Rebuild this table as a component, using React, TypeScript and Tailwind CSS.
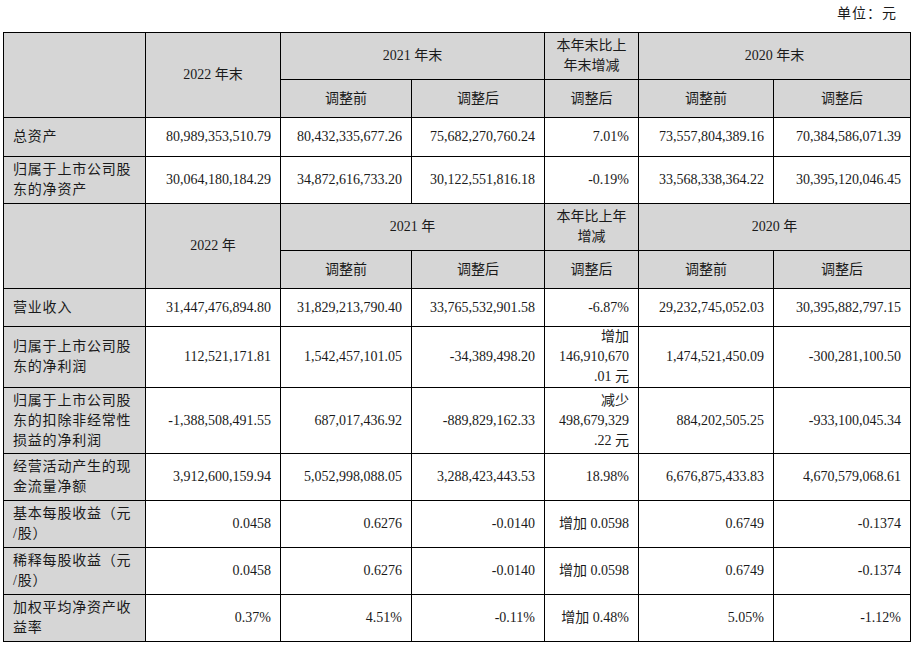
import React from "react";

type Row = { label: React.ReactNode; h: string; values: React.ReactNode[] };

const balanceRows: Row[] = [
  {
    label: "总资产",
    h: "h-[39px]",
    values: ["80,989,353,510.79", "80,432,335,677.26", "75,682,270,760.24", "7.01%", "73,557,804,389.16", "70,384,586,071.39"],
  },
  {
    label: "归属于上市公司股东的净资产",
    h: "h-[47px]",
    values: ["30,064,180,184.29", "34,872,616,733.20", "30,122,551,816.18", "-0.19%", "33,568,338,364.22", "30,395,120,046.45"],
  },
];

const incomeRows: Row[] = [
  {
    label: "营业收入",
    h: "h-[38px]",
    values: ["31,447,476,894.80", "31,829,213,790.40", "33,765,532,901.58", "-6.87%", "29,232,745,052.03", "30,395,882,797.15"],
  },
  {
    label: "归属于上市公司股东的净利润",
    h: "h-[61px]",
    values: [
      "112,521,171.81",
      "1,542,457,101.05",
      "-34,389,498.20",
      <>
        增加
        <br />
        146,910,670
        <br />
        .01 元
      </>,
      "1,474,521,450.09",
      "-300,281,100.50",
    ],
  },
  {
    label: "归属于上市公司股东的扣除非经常性损益的净利润",
    h: "h-[66px]",
    values: [
      "-1,388,508,491.55",
      "687,017,436.92",
      "-889,829,162.33",
      <>
        减少
        <br />
        498,679,329
        <br />
        .22 元
      </>,
      "884,202,505.25",
      "-933,100,045.34",
    ],
  },
  {
    label: "经营活动产生的现金流量净额",
    h: "h-[47px]",
    values: ["3,912,600,159.94", "5,052,998,088.05", "3,288,423,443.53", "18.98%", "6,676,875,433.83", "4,670,579,068.61"],
  },
  {
    label: (
      <>
        基本每股收益（元
        <br />
        /股）
      </>
    ),
    h: "h-[47px]",
    values: ["0.0458", "0.6276", "-0.0140", "增加 0.0598", "0.6749", "-0.1374"],
  },
  {
    label: (
      <>
        稀释每股收益（元
        <br />
        /股）
      </>
    ),
    h: "h-[47px]",
    values: ["0.0458", "0.6276", "-0.0140", "增加 0.0598", "0.6749", "-0.1374"],
  },
  {
    label: (
      <>
        加权平均净资产收
        <br />
        益率
      </>
    ),
    h: "h-[47px]",
    values: ["0.37%", "4.51%", "-0.11%", "增加 0.48%", "5.05%", "-1.12%"],
  },
];

const base = "border border-black py-0 leading-[20px] font-normal";
const head = `${base} bg-[#d6d6d6] text-center px-1`;
const label = `${base} bg-[#d6d6d6] text-left pl-[9px] pr-1 tracking-[0.8px]`;
const num = `${base} text-right pr-[9px] pl-1`;

const DataRows = ({ rows }: { rows: Row[] }) => (
  <>
    {rows.map((r, i) => (
      <tr key={i} className={r.h}>
        <td className={label}>{r.label}</td>
        {r.values.map((v, j) => (
          <td key={j} className={num}>
            {v}
          </td>
        ))}
      </tr>
    ))}
  </>
);

const HeaderRows = ({ year, change, suffix }: { year: string; change: React.ReactNode; suffix: string }) => (
  <>
    <tr className="h-[47px]">
      <th rowSpan={2} className={head}></th>
      <th rowSpan={2} className={head}>
        2022 {suffix}
      </th>
      <th colSpan={2} className={head}>
        2021 {suffix}
      </th>
      <th className={head}>{change}</th>
      <th colSpan={2} className={head}>
        2020 {suffix}
      </th>
    </tr>
    <tr className="h-[38px]">
      <th className={head}>调整前</th>
      <th className={head}>调整后</th>
      <th className={head}>调整后</th>
      <th className={head}>调整前</th>
      <th className={head}>调整后</th>
    </tr>
  </>
);

const App: React.FC = () => {
  return (
    <div
      className="w-[919px] h-[646px] bg-white text-[#1a1a1a] text-[14px] overflow-hidden"
      style={{ fontFamily: '"Liberation Serif", "Noto Sans CJK SC", serif' }}
    >
      <div className="h-[32px] flex items-start justify-end pr-[22px] pt-[3px] tracking-[1px]">单位：元</div>

      {/* main table */}
      <table className="ml-[3px] w-[907px] table-fixed border-collapse">
        <colgroup>
          <col className="w-[142px]" />
          <col className="w-[135px]" />
          <col className="w-[131px]" />
          <col className="w-[133px]" />
          <col className="w-[94px]" />
          <col className="w-[135px]" />
          <col className="w-[137px]" />
        </colgroup>
        <tbody>
          <HeaderRows
            year="末"
            suffix="年末"
            change={
              <>
                本年末比上
                <br />
                年末增减
              </>
            }
          />
          <DataRows rows={balanceRows} />
          <HeaderRows
            year=""
            suffix="年"
            change={
              <>
                本年比上年
                <br />
                增减
              </>
            }
          />
          <DataRows rows={incomeRows} />
        </tbody>
      </table>
    </div>
  );
};

export default App;
